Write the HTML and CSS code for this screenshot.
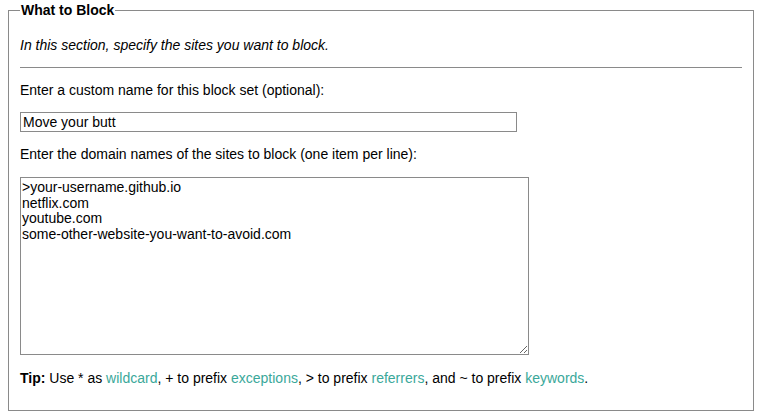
FILE: index.html
```html
<!DOCTYPE html>
<html>
<head>
<meta charset="utf-8">
<link rel="stylesheet" href="styles.css">
</head>
<body>
<fieldset class="section">
  <legend class="section-title">What to Block</legend>
  <p class="intro">In this section, specify the sites you want to block.</p>
  <hr class="rule">
  <p class="label">Enter a custom name for this block set (optional):</p>
  <input class="name-input" type="text" value="Move your butt">
  <p class="label label-sites">Enter the domain names of the sites to block (one item per line):</p>
  <textarea class="sites" rows="11">&gt;your-username.github.io
netflix.com
youtube.com
some-other-website-you-want-to-avoid.com</textarea>
  <p class="tip"><b>Tip:</b> Use * as <a href="#">wildcard</a>, + to prefix <a href="#">exceptions</a>, &gt; to prefix <a href="#">referrers</a>, and ~ to prefix <a href="#">keywords</a>.</p>
</fieldset>
<fieldset class="section">
  <legend class="section-title">When to Block</legend>
</fieldset>
</body>
</html>
```
FILE: styles.css
```css
html, body {
  background: #ffffff;
}
body {
  margin: 2px 8px 8px;
  font-family: "Liberation Sans", Arial, sans-serif;
  font-size: 14px;
  color: #000;
}
.section {
  margin: 0 0 2px;
  padding: 0 11px 14px;
  border: 1px solid #8a8a8a;
  min-width: 0;
}
.section-title {
  font-weight: bold;
  font-size: 14px;
  padding: 0 1px;
}
.intro {
  font-style: italic;
  margin: 19px 0 14px;
}
.rule {
  border: 0;
  border-top: 1px solid #8a8a8a;
  margin: 0;
  height: 0;
}
.label {
  margin: 14px 0 14px;
}
.label-sites {
  margin-bottom: 15px;
}
.name-input {
  display: block;
  width: 497px;
  height: 20px;
  box-sizing: border-box;
  border: 1px solid #8a8a8a;
  padding: 0 2px;
  margin: 0;
  font: 14px "Liberation Sans", Arial, sans-serif;
  color: #000;
}
.sites {
  display: block;
  width: 509px;
  height: 178px;
  box-sizing: border-box;
  border: 1px solid #8a8a8a;
  padding: 2px 1px 1px;
  margin: 0;
  font: 14px/15.6px "Liberation Sans", Arial, sans-serif;
  color: #000;
  resize: vertical;
}
.tip {
  margin: 15px 0 0;
  padding-bottom: 10px;
}
.tip a {
  color: #3aa89a;
  text-decoration: none;
}
```
